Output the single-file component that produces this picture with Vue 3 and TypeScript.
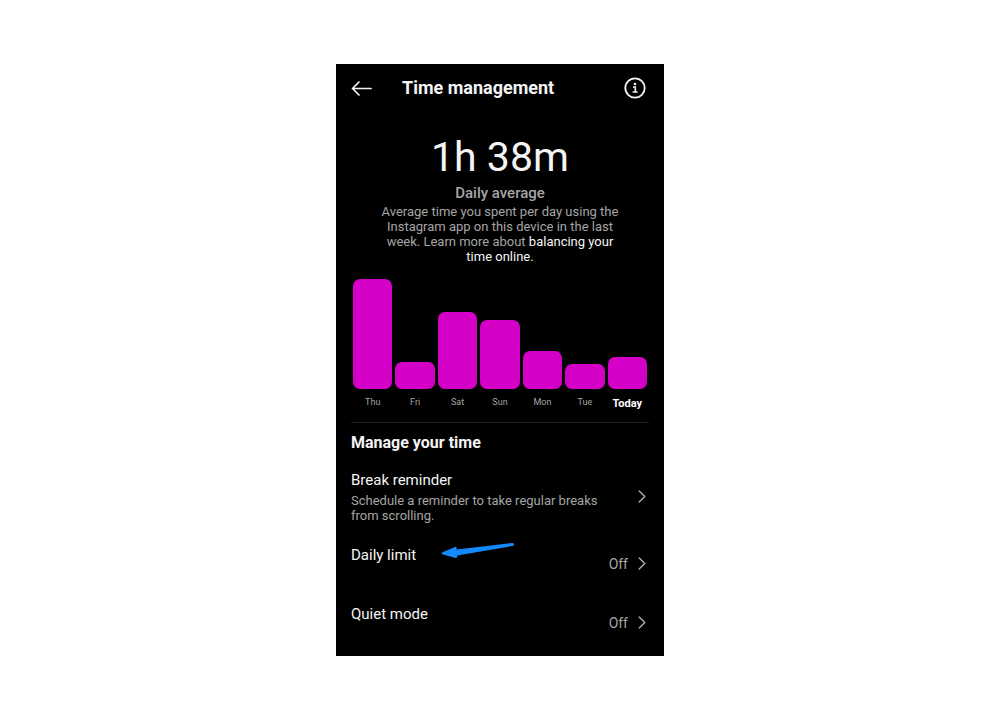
<script setup lang="ts">
interface Day {
  label: string
  height: number
  today?: boolean
}

interface Setting {
  title: string
  note?: string
  value?: string
  marked?: boolean
}

const days: Day[] = [
  { label: 'Thu', height: 110 },
  { label: 'Fri', height: 27 },
  { label: 'Sat', height: 77 },
  { label: 'Sun', height: 69 },
  { label: 'Mon', height: 38 },
  { label: 'Tue', height: 25 },
  { label: 'Today', height: 32, today: true },
]

const settings: Setting[] = [
  { title: 'Break reminder', note: 'Schedule a reminder to take regular breaks from scrolling.' },
  { title: 'Daily limit', value: 'Off', marked: true },
  { title: 'Quiet mode', value: 'Off' },
]
</script>

<template>
  <div class="page">
    <main class="screen">
      <header class="bar">
        <button class="icon" type="button" aria-label="Back">
          <svg width="22" height="18" viewBox="0 0 22 18" fill="none" stroke="#f4f4f4" stroke-width="1.7" stroke-linecap="round" stroke-linejoin="round">
            <path d="M20 9.5H1.5M8 3L1.5 9.5L8 16" />
          </svg>
        </button>
        <h1>Time management</h1>
        <button class="icon" type="button" aria-label="Information">
          <svg width="22" height="22" viewBox="0 0 22 22" fill="none" stroke="#f4f4f4">
            <circle cx="11" cy="11" r="9.7" stroke-width="1.8" />
            <circle cx="11" cy="7" r="1.3" fill="#f4f4f4" stroke="none" />
            <path d="M9 10H11.3V15M8.6 15H13.6" stroke-width="1.6" />
          </svg>
        </button>
      </header>

      <section class="summary">
        <p class="total">1h 38m</p>
        <h2>Daily average</h2>
        <p class="about">
          Average time you spent per day using the Instagram app on this device in the last week. Learn more about
          <a href="#">balancing your time online.</a>
        </p>
      </section>

      <section class="chart" aria-label="Time spent per day">
        <div v-for="day in days" :key="day.label" class="day">
          <div class="column" :style="{ height: day.height + 'px' }"></div>
          <span class="label" :class="{ today: day.today }">{{ day.label }}</span>
        </div>
      </section>

      <section class="manage">
        <h2>Manage your time</h2>
        <button v-for="item in settings" :key="item.title" class="row" type="button">
          <span class="text">
            <span class="title">{{ item.title }}</span>
            <span v-if="item.note" class="note">{{ item.note }}</span>
          </span>
          <span class="end">
            <span v-if="item.value">{{ item.value }}</span>
            <svg width="8" height="13" viewBox="0 0 8 13" fill="none" stroke="#b4b4b4" stroke-width="1.3" stroke-linecap="round" stroke-linejoin="round">
              <path d="M1.2 1L6.8 6.5L1.2 12" />
            </svg>
          </span>
          <svg v-if="item.marked" class="pointer" width="74" height="18" viewBox="0 0 74 18" fill="#1389fd">
            <path d="M1.2 12.3Q0 11.3 1.6 10.3L14 5Q15.7 4.6 15.6 6.2L15.6 7.4L71 1Q73.2 1 73 2.6Q73 3.8 71.4 4.1L16.2 13.4L16.4 14.6Q16.3 16.2 14.6 15.9Z" />
          </svg>
        </button>
      </section>
    </main>
  </div>
</template>

<style>
body {
  margin: 0;
  background: #fff;
}
</style>

<style scoped>
.page {
  box-sizing: border-box;
  min-height: 100vh;
  padding: 64px 16px;
  font-family: Roboto, "Liberation Sans", sans-serif;
}

.screen {
  max-width: 328px;
  margin: 0 auto;
  background: #000;
  color: #f4f4f4;
}

h1,
h2,
p {
  margin: 0;
}

button {
  padding: 0;
  border: 0;
  background: none;
  color: inherit;
  font: inherit;
  text-align: left;
  cursor: pointer;
}

.bar {
  display: flex;
  align-items: center;
  height: 48px;
  padding: 0 18px 0 15px;
}

.bar h1 {
  flex: 1;
  padding-left: 29px;
  font-size: 18px;
  line-height: 24px;
  font-weight: 700;
}

.icon {
  display: flex;
}

.summary {
  padding: 20px 40px 0;
  text-align: center;
  color: #a5a5a5;
}

.total {
  font-size: 41px;
  line-height: 50px;
  color: #f4f4f4;
}

.summary h2 {
  font-size: 15px;
  line-height: 22px;
  font-weight: 500;
}

.about {
  font-size: 13px;
  line-height: 15px;
}

.about a {
  color: #f4f4f4;
  text-decoration: none;
}

.chart {
  display: flex;
  align-items: flex-end;
  gap: 3px;
  padding: 15px 17px 8px;
}

.day {
  flex: 1;
}

.column {
  border-radius: 7px;
  background: #d400c8;
}

.label {
  display: block;
  height: 25px;
  font-size: 9px;
  line-height: 26px;
  text-align: center;
  color: #a5a5a5;
}

.today {
  font-size: 11px;
  line-height: 29px;
  font-weight: 700;
  color: #fff;
}

.manage {
  margin: 0 15px;
  padding-bottom: 15px;
  border-top: 1px solid #1e1e1e;
}

.manage h2 {
  padding: 9px 0 16px;
  font-size: 16px;
  line-height: 22px;
  font-weight: 700;
}

.row {
  position: relative;
  display: flex;
  width: 100%;
  min-height: 37px;
  justify-content: space-between;
  align-items: center;
}

.row + .row {
  margin-top: 22px;
}

.text {
  align-self: flex-start;
  width: 250px;
}

.title,
.note {
  display: block;
}

.title {
  font-size: 15px;
  line-height: 20px;
}

.note {
  padding-top: 3px;
  font-size: 13px;
  line-height: 15px;
  color: #a5a5a5;
}

.end {
  display: flex;
  align-items: center;
  gap: 10px;
  padding-right: 3px;
  font-size: 14px;
  line-height: 20px;
  color: #a5a5a5;
}

.pointer {
  position: absolute;
  top: -3px;
  left: 90px;
}
</style>
